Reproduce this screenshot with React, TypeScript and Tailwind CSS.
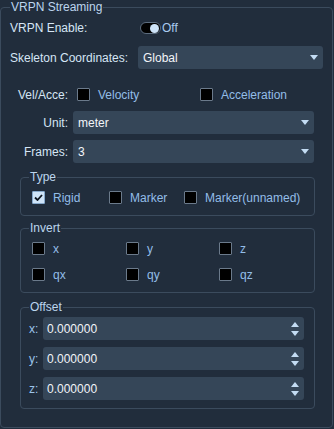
import React from "react";

const Box = ({ checked = false }: { checked?: boolean }) =>
  checked ? (
    <div className="w-[13px] h-[13px] shrink-0 bg-[#cfe4f8] border border-[#86a9cc] rounded-[1px] flex items-center justify-center">
      <svg width="9" height="7" viewBox="0 0 9 7">
        <path d="M1 3.5 L3.5 6 L8 1" stroke="#0e1620" strokeWidth="1.8" fill="none" />
      </svg>
    </div>
  ) : (
    <div className="w-[13px] h-[13px] shrink-0 bg-black border border-[#6b7a8b] rounded-[1px]" />
  );

const Check = ({ label, checked = false, w }: { label: string; checked?: boolean; w: string }) => (
  <div className={`flex items-center ${w}`}>
    <Box checked={checked} />
    <span className="ml-[8px] text-[#93bde8]">{label}</span>
  </div>
);

const DownArrow = () => (
  <svg width="8" height="5" viewBox="0 0 8 5">
    <path d="M0 0 H8 L4 5 Z" fill="#c3dcf3" />
  </svg>
);

const Select = ({ value, w }: { value: string; w: string }) => (
  <div className={`${w} h-[23px] bg-[#354658] rounded-[3px] flex items-center pl-[5px] pr-[5px] justify-between`}>
    <span className="text-[#f2f5f8]">{value}</span>
    <DownArrow />
  </div>
);

const Spin = ({ label }: { label: string }) => (
  <div className="flex items-center h-[23px]">
    <span className="w-[14px] ml-[8px] text-[#9cc4ea]">{label}</span>
    <div className="w-[261px] h-[23px] bg-[#354658] rounded-[3px] flex items-center justify-between pl-[4px] pr-[5px]">
      <span className="text-[#f2f5f8]">0.000000</span>
      <div className="flex flex-col gap-[4px] items-center">
        <svg width="8" height="5" viewBox="0 0 8 5">
          <path d="M0 5 H8 L4 0 Z" fill="#c3dcf3" />
        </svg>
        <svg width="8" height="5" viewBox="0 0 8 5">
          <path d="M0 0 H8 L4 5 Z" fill="#c3dcf3" />
        </svg>
      </div>
    </div>
  </div>
);

export default function App() {
  return (
    <div className="w-[334px] h-[429px] bg-[#212d3c] font-['Liberation_Sans',Arial,sans-serif] text-[12px] leading-[14px] text-[#d5e5f5]">
      <fieldset className="w-[333px] h-[428px] border border-[#3b4b5d] rounded-[4px] flex flex-col">
        <legend className="ml-[9px] px-[1px] text-[#bcd5ee]">VRPN Streaming</legend>

        <div className="flex items-center h-[20px] mt-[4px] pl-[9px]">
          <span className="w-[130px]">VRPN Enable:</span>
          <div className="w-[21px] h-[12px] rounded-full bg-black border border-[#5c6c7e] flex items-center justify-end pr-[1px]">
            <div className="w-[9px] h-[9px] rounded-full bg-[#cde3f8]" />
          </div>
          <span className="ml-[1px] text-[#a9cbef]">Off</span>
        </div>

        <div className="flex items-center mt-[8px] pl-[9px]">
          <span className="w-[128px]">Skeleton Coordinates:</span>
          <Select value="Global" w="w-[185px]" />
        </div>

        <div className="flex items-center h-[19px] mt-[16px]">
          <span className="w-[67px] text-right">Vel/Acce:</span>
          <div className="ml-[9px] flex items-center">
            <Check label="Velocity" w="w-[123px]" />
            <Check label="Acceleration" w="w-[100px]" />
          </div>
        </div>

        <div className="flex items-center mt-[7px]">
          <span className="w-[67px] text-right">Unit:</span>
          <div className="ml-[5px]">
            <Select value="meter" w="w-[241px]" />
          </div>
        </div>

        <div className="flex items-center mt-[6px]">
          <span className="w-[67px] text-right">Frames:</span>
          <div className="ml-[5px]">
            <Select value="3" w="w-[241px]" />
          </div>
        </div>

        <fieldset className="ml-[19px] mt-[7px] w-[295px] h-[46px] border border-[#3b4b5d] rounded-[4px]">
          <legend className="ml-[8px] px-[1px] text-[#bcd5ee]">Type</legend>
          <div className="flex items-center h-[19px] mt-[4px] pl-[11px]">
            <Check label="Rigid" checked w="w-[77px]" />
            <Check label="Marker" w="w-[75px]" />
            <Check label="Marker(unnamed)" w="w-[120px]" />
          </div>
        </fieldset>

        <fieldset className="ml-[19px] mt-[5px] w-[295px] h-[72px] border border-[#3b4b5d] rounded-[4px]">
          <legend className="ml-[8px] px-[1px] text-[#bcd5ee]">Invert</legend>
          <div className="flex flex-col gap-[7px] mt-[4px] pl-[11px]">
            <div className="flex items-center h-[19px]">
              <Check label="x" w="w-[94px]" />
              <Check label="y" w="w-[93px]" />
              <Check label="z" w="w-[60px]" />
            </div>
            <div className="flex items-center h-[19px]">
              <Check label="qx" w="w-[94px]" />
              <Check label="qy" w="w-[93px]" />
              <Check label="qz" w="w-[60px]" />
            </div>
          </div>
        </fieldset>

        <fieldset className="ml-[19px] mt-[7px] w-[295px] h-[109px] border border-[#3b4b5d] rounded-[4px]">
          <legend className="ml-[8px] px-[1px] text-[#bcd5ee]">Offset</legend>
          <div className="flex flex-col gap-[7px] mt-[3px]">
            <Spin label="x:" />
            <Spin label="y:" />
            <Spin label="z:" />
          </div>
        </fieldset>
      </fieldset>
    </div>
  );
}
